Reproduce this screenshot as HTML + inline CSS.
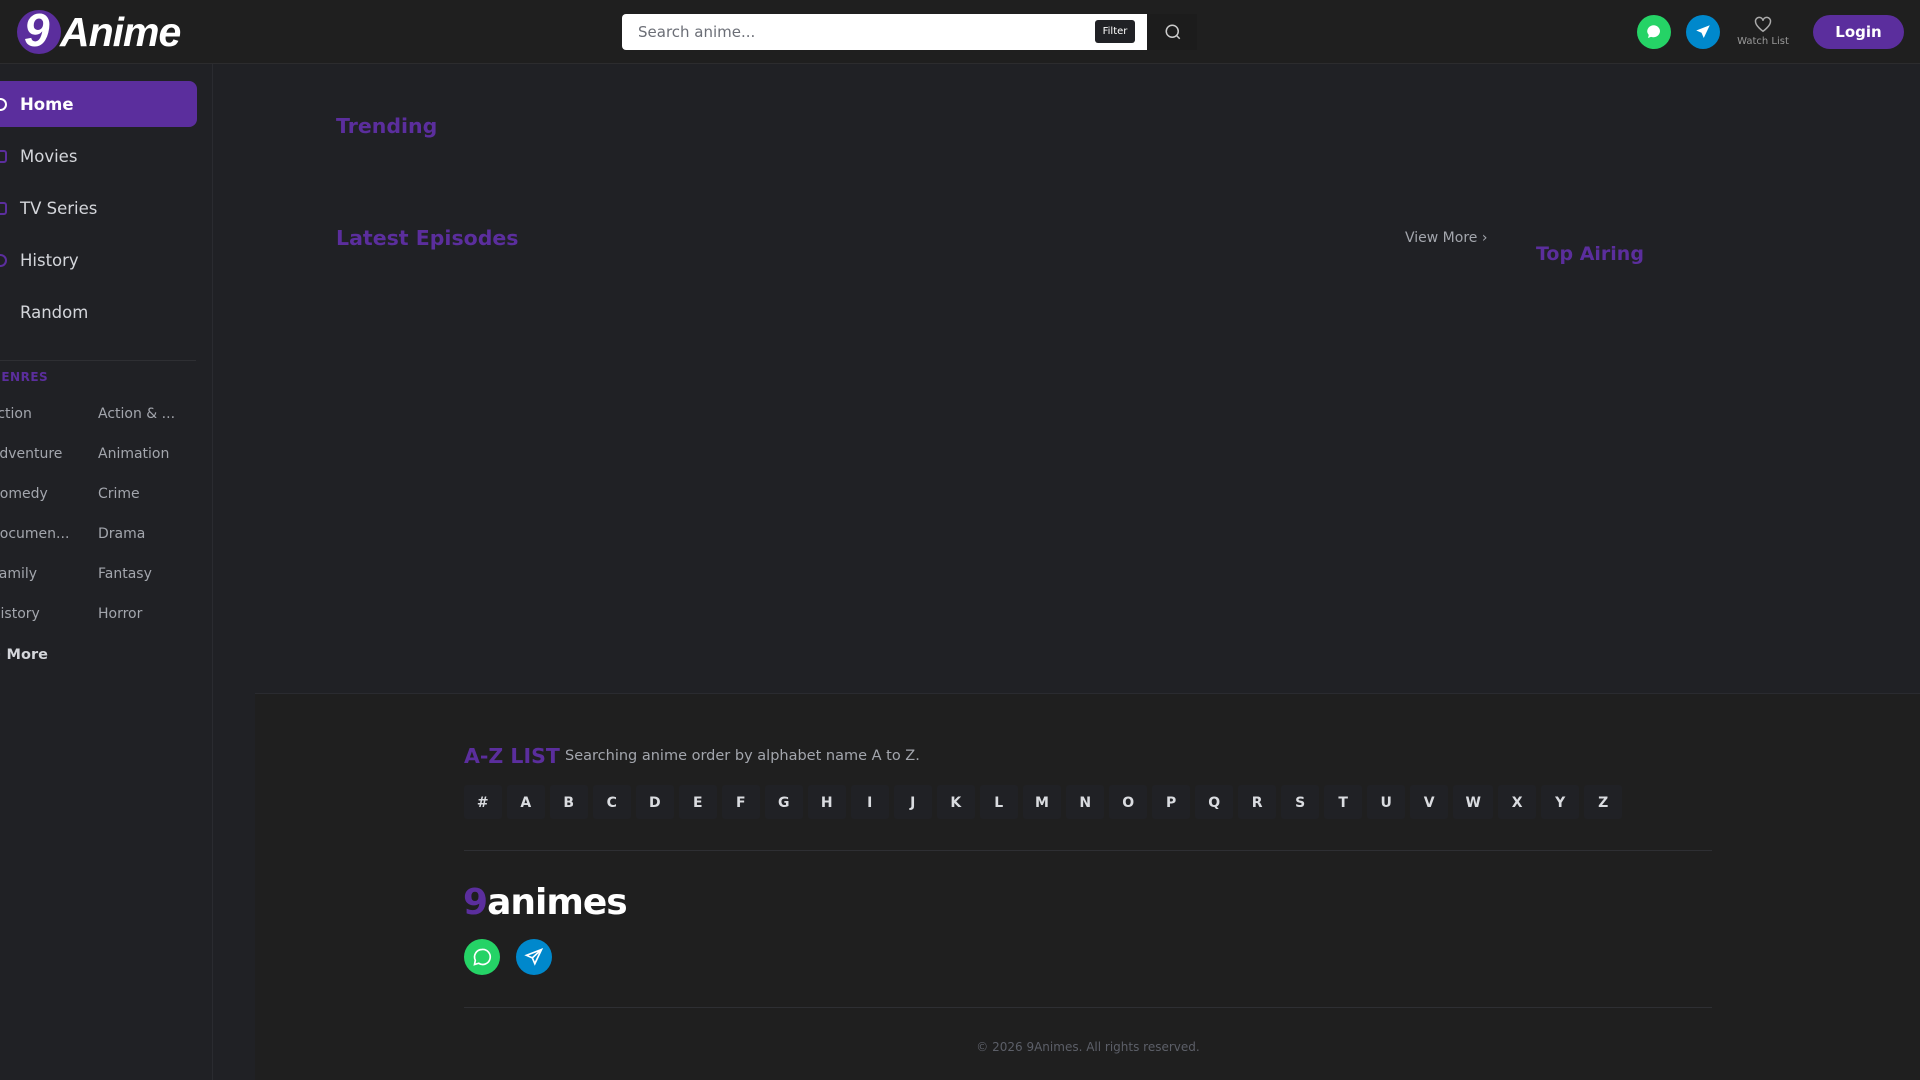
<!DOCTYPE html>
<html><head><meta charset="utf-8"><style>
*{margin:0;padding:0;box-sizing:border-box}
body{width:1920px;height:1080px;overflow:hidden;background:#202125;font-family:"DejaVu Sans","Liberation Sans",sans-serif;position:relative;color:#c9cbd1}
.abs{position:absolute}
header{position:absolute;left:0;top:0;width:1920px;height:64px;background:#1f1f1f;border-bottom:1px solid #2c2c2e}
.side{position:absolute;left:0;top:64px;width:213px;height:1016px;border-right:1px solid #2a2b30;background:#202125}
.nav{position:absolute;left:0;width:197px;height:46px;font-size:16.5px;line-height:48px;padding-left:20px;color:#d4d6db}
.nav.on{background:#5b2e9d;border-radius:0 8px 8px 0;color:#fff;font-weight:bold}
.ic{position:absolute;left:-6px;top:17px;width:13px;height:13px;border:2px solid #5b2e9d;border-radius:3px}
.g{position:absolute;font-size:14px;color:#a3a6ad;white-space:nowrap}
h2{position:absolute;font-size:20.5px;color:#5b2e9d;font-weight:bold}
.foot{position:absolute;left:255px;top:693px;width:1665px;height:387px;background:#1f1f1f;border-top:1px solid #2a2b30}
.az{position:absolute;top:785px;left:464px;display:flex;gap:5.5px}
.az span{display:block;height:34px;line-height:36px;padding:0 12px;background:#202125;color:#dadce0;font-weight:bold;font-size:14px;border-radius:3px;min-width:37.5px;text-align:center}
.hr{position:absolute;left:464px;width:1248px;height:1px;background:#2e2f33}
.circ{position:absolute;border-radius:50%}
</style></head><body>
<header>
 <div class="abs" style="left:17px;top:10px;width:44px;height:44px;border-radius:50%;background:#5b2e9d"></div>
 <div class="abs" style="left:24px;top:3px;font-size:46px;font-weight:bold;color:#fff;font-style:italic;letter-spacing:-2px;font-family:'Liberation Sans',sans-serif">9</div>
 <div class="abs" style="left:60px;top:9px;font-size:41px;font-weight:bold;color:#fff;font-style:italic;letter-spacing:-1px;font-family:'Liberation Sans',sans-serif">Anime</div>
 <div class="abs" style="left:622px;top:14px;width:525px;height:36px;background:#fff;border-radius:4px 0 0 4px"></div>
 <div class="abs" style="left:638px;top:23px;font-size:15px;color:#6b6e76">Search anime...</div>
 <div class="abs" style="left:1095px;top:20px;width:40px;height:23px;background:#202125;border-radius:3px;color:#fff;font-size:10px;line-height:24px;text-align:center">Filter</div>
 <div class="abs" style="left:1147px;top:14px;width:50px;height:36px;background:#1c1c1c"></div>
 <svg class="abs" style="left:1164px;top:23px" width="18" height="18" viewBox="0 0 24 24" fill="none" stroke="#ccc" stroke-width="2"><circle cx="11" cy="11" r="8"/><path d="M21 21l-4.3-4.3"/></svg>
 <div class="circ" style="left:1637px;top:15px;width:34px;height:34px;background:#25d366"></div>
 <svg class="abs" style="left:1645px;top:23px" width="18" height="18" viewBox="0 0 24 24"><path d="M12 3a9 8 0 0 0-7 13l-1 4 4-1.5A9 8 0 1 0 12 3z" fill="#fff"/></svg>
 <div class="circ" style="left:1686px;top:15px;width:34px;height:34px;background:#0088cc"></div>
 <svg class="abs" style="left:1694px;top:23px" width="18" height="18" viewBox="0 0 24 24"><path d="M21 3L3 10l7 3 3 7z" fill="#fff"/></svg>
 <svg class="abs" style="left:1754px;top:16px" width="18" height="17" viewBox="0 0 24 22" fill="none" stroke="#aaa" stroke-width="2"><path d="M12 20S2 13 2 7a5 5 0 0 1 10-1 5 5 0 0 1 10 1c0 6-10 13-10 13z"/></svg>
 <div class="abs" style="left:1733px;top:36px;width:60px;text-align:center;font-size:10px;color:#999">Watch List</div>
 <div class="abs" style="left:1813px;top:15px;width:91px;height:34px;background:#5b2e9d;border-radius:17px;color:#fff;font-weight:bold;font-size:15px;line-height:35px;text-align:center">Login</div>
</header>
<div class="side">
 <div class="nav on" style="top:17px"><span class="ic" style="border-radius:50%;border-color:#fff"></span>Home</div>
 <div class="nav" style="top:69px"><span class="ic"></span>Movies</div>
 <div class="nav" style="top:121px"><span class="ic"></span>TV Series</div>
 <div class="nav" style="top:173px"><span class="ic" style="border-radius:50%"></span>History</div>
 <div class="nav" style="top:225px"><span class="ic" style="border:none;color:#5b2e9d"></span>Random</div>
 <div class="abs" style="left:0;top:296px;width:196px;height:1px;background:#2e2f33"></div>
 <div class="abs" style="left:-9px;top:306px;font-size:12px;font-weight:bold;color:#5b2e9d;letter-spacing:0.5px">GENRES</div>
 <div class="g" style="left:-12px;top:342px">Action</div><div class="g" style="left:98px;top:342px">Action &amp; ...</div>
 <div class="g" style="left:-10px;top:382px">Adventure</div><div class="g" style="left:98px;top:382px">Animation</div>
 <div class="g" style="left:-10px;top:422px">Comedy</div><div class="g" style="left:98px;top:422px">Crime</div>
 <div class="g" style="left:-11px;top:462px">Documen...</div><div class="g" style="left:98px;top:462px">Drama</div>
 <div class="g" style="left:-8px;top:502px">Family</div><div class="g" style="left:98px;top:502px">Fantasy</div>
 <div class="g" style="left:-10px;top:542px">History</div><div class="g" style="left:98px;top:542px">Horror</div>
 <div class="abs" style="left:-4px;top:583px;font-size:14.5px;font-weight:bold;color:#d4d6db">· More</div>
</div>
<h2 style="left:336px;top:114px">Trending</h2>
<h2 style="left:336px;top:226px">Latest Episodes</h2>
<div class="abs" style="left:1405px;top:230px;font-size:14px;color:#a3a6ad">View More ›</div>
<h2 style="left:1536px;top:243px;font-size:19px">Top Airing</h2>
<div class="foot"></div>
<div class="abs" style="left:464px;top:744px;font-size:20.5px;font-weight:bold;color:#5b2e9d">A-Z LIST</div>
<div class="abs" style="left:565px;top:748px;font-size:14.5px;color:#a3a6ad">Searching anime order by alphabet name A to Z.</div>
<div class="az"><span>#</span><span>A</span><span>B</span><span>C</span><span>D</span><span>E</span><span>F</span><span>G</span><span>H</span><span>I</span><span>J</span><span>K</span><span>L</span><span>M</span><span>N</span><span>O</span><span>P</span><span>Q</span><span>R</span><span>S</span><span>T</span><span>U</span><span>V</span><span>W</span><span>X</span><span>Y</span><span>Z</span></div>
<div class="hr" style="top:850px"></div>
<div class="abs" style="left:463px;top:882px;font-size:36px;font-weight:bold;color:#fff;letter-spacing:-1px"><span style="color:#5b2e9d">9</span>animes</div>
<div class="circ" style="left:464px;top:939px;width:36px;height:36px;background:#25d366"></div>
<svg class="abs" style="left:472px;top:947px" width="20" height="20" viewBox="0 0 24 24" fill="none" stroke="#fff" stroke-width="2"><path d="M12 3a9 9 0 0 0-8 13l-1 5 5-1.5A9 9 0 1 0 12 3z"/></svg>
<div class="circ" style="left:516px;top:939px;width:36px;height:36px;background:#0088cc"></div>
<svg class="abs" style="left:524px;top:947px" width="20" height="20" viewBox="0 0 24 24" fill="none" stroke="#fff" stroke-width="2"><path d="M21 3L3 10l7 3 3 7zM10 13l11-10"/></svg>
<div class="hr" style="top:1007px"></div>
<div class="abs" style="left:888px;top:1040px;width:400px;text-align:center;font-size:12px;color:#5c5f68">© 2026 9Animes. All rights reserved.</div>
</body></html>
